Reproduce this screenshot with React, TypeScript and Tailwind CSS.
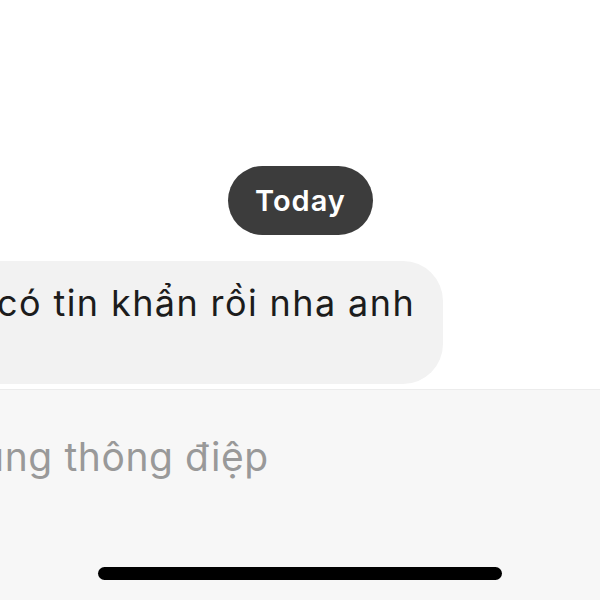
import React from 'react';

/* ── Chat thread fragment: date pill, incoming bubble, composer ── */

export default function App() {
  return (
    <div
      className="w-[600px] h-[600px] overflow-hidden bg-white flex flex-col"
      style={{ fontFamily: 'Inter, "Noto Sans", sans-serif' }}
    >
      <div className="h-[166px]" />
      <div className="flex justify-center pl-[1px]">
        <span className="h-[69px] w-[145px] rounded-full bg-[#3c3c3c] text-white text-[29px] tracking-[1px] font-semibold flex items-center justify-center">
          Today
        </span>
      </div>
      <div className="h-[26px]" />
      <div className="flex">
        <div className="ml-[-60px] w-[503px] h-[123px] rounded-[40px] bg-[#f2f2f2] pl-[57px] pt-[20px]">
          <span className="text-[36px] tracking-[1.4px] text-[#1c1c1c] leading-[44px] whitespace-nowrap">
            có tin khẩn rồi nha anh
          </span>
        </div>
      </div>
      <div className="h-[5px]" />
      <div className="flex-1 bg-[#f7f7f7] border-t border-[#ececec] flex flex-col">
        <div className="pt-[43px] ml-[-19px] text-[39px] tracking-[0.6px] text-[#999999] leading-[48px] whitespace-nowrap">
          ung thông điệp
        </div>
        <div className="flex-1" />
        <div className="flex justify-center pb-[20px]">
          <div className="w-[404px] h-[13px] rounded-full bg-black" />
        </div>
      </div>
    </div>
  );
}
